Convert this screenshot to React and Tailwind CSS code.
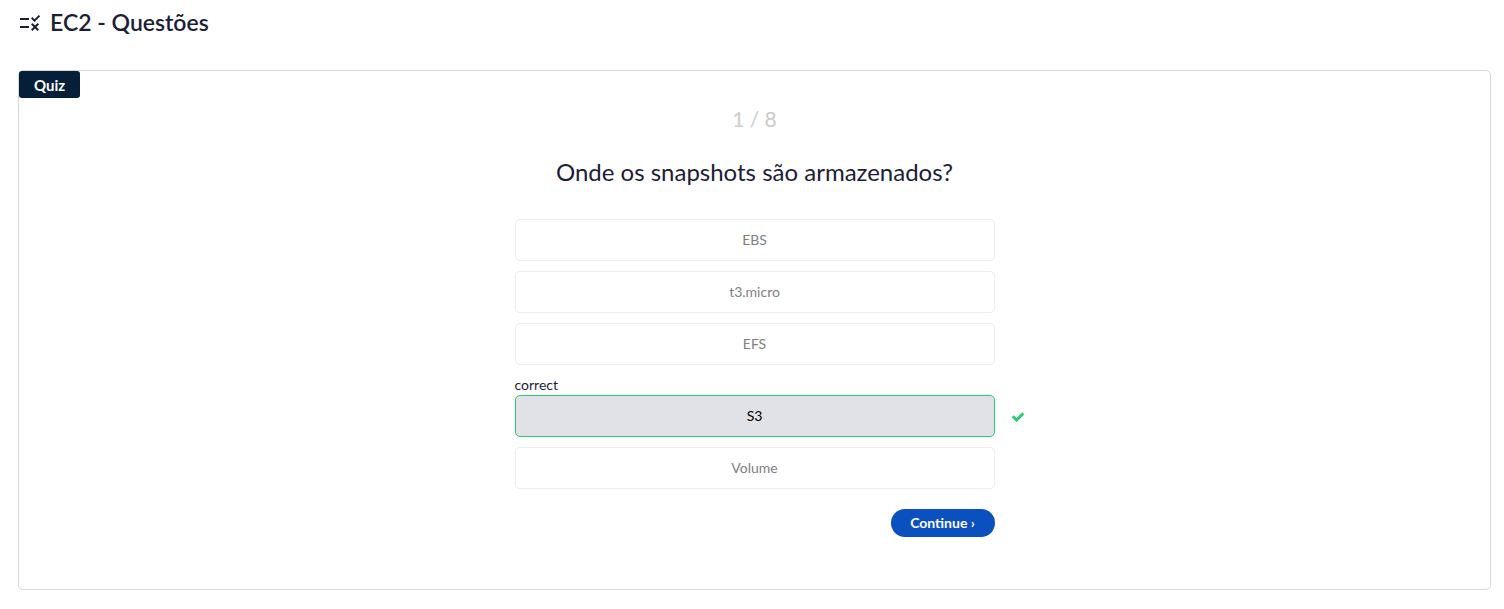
const options = [
  { label: 'EBS' },
  { label: 't3.micro' },
  { label: 'EFS' },
  { label: 'S3', correct: true },
  { label: 'Volume' },
];

function RuleIcon() {
  return (
    <svg viewBox="0 0 24 24" className="size-6 shrink-0" fill="currentColor" aria-hidden="true">
      <path d="M16.54 11L13 7.46l1.41-1.41 2.12 2.12 4.24-4.24 1.41 1.41L16.54 11zM11 7H2v2h9V7zM21 13.41L19.59 12 17 14.59 14.41 12 13 13.41 15.59 16 13 18.59 14.41 20 17 17.41 19.59 20 21 18.59 18.41 16 21 13.41zM11 15H2v2h9v-2z" />
    </svg>
  );
}

function CheckIcon() {
  return (
    <svg viewBox="0 0 1792 1792" className="size-3.5" fill="currentColor" aria-hidden="true">
      <path d="M1671 566q0 40-28 68l-724 724-136 136q-28 28-68 28t-68-28l-136-136-362-362q-28-28-28-68t28-68l136-136q28-28 68-28t68 28l294 295 656-657q28-28 68-28t68 28l136 136q28 28 28 68z" />
    </svg>
  );
}

function Option({ label, correct }) {
  if (correct) {
    return (
      <li>
        <p className="h-5 text-sm leading-5">correct</p>
        <div className="relative">
          <button
            type="button"
            className="block h-[42px] w-full rounded-[5px] border border-[#2ecc71] bg-[#e1e2e7] text-sm text-black"
          >
            {label}
          </button>
          <span className="absolute inset-y-0 left-full ml-4 flex items-center pt-0.5 text-[#2ecc71]">
            <CheckIcon />
          </span>
        </div>
      </li>
    );
  }
  return (
    <li>
      <button
        type="button"
        className="block h-[42px] w-full rounded-[5px] border border-[#ededed] bg-white text-sm text-[#808080]"
      >
        {label}
      </button>
    </li>
  );
}

export default function App() {
  return (
    <main className="pt-2 pr-[13px] pb-5 pl-[18px] font-['Lato',sans-serif] text-[#1c1d36]">
      <header className="flex items-center gap-2">
        <RuleIcon />
        <h1 className="pb-0.5 text-[23px] leading-7 font-semibold">EC2 - Questões</h1>
      </header>

      <section className="mt-8 rounded-[5px] border border-[#d8d8d8] pb-[52px]">
        <div className="flex">
          <h2 className="rounded-[3px] bg-[#051f38] px-[15px] pt-px text-[15px] leading-[26px] font-bold text-white">Quiz</h2>
        </div>

        <div className="mx-auto w-full max-w-[480px]">
          <p className="mt-2 text-center text-[21px] leading-[26px] text-[#ccc]">1 / 8</p>
          <h3 className="mt-6 text-center text-2xl leading-8">Onde os snapshots são armazenados?</h3>
          <ul className="mt-[31px] flex flex-col gap-2.5">
            {options.map((option) => (
              <Option key={option.label} {...option} />
            ))}
          </ul>
          <div className="mt-5 flex justify-end">
            <button
              type="button"
              className="h-7 w-[104px] rounded-full bg-[#0a50be] text-sm font-bold text-white"
            >
              Continue ›
            </button>
          </div>
        </div>
      </section>
    </main>
  );
}
